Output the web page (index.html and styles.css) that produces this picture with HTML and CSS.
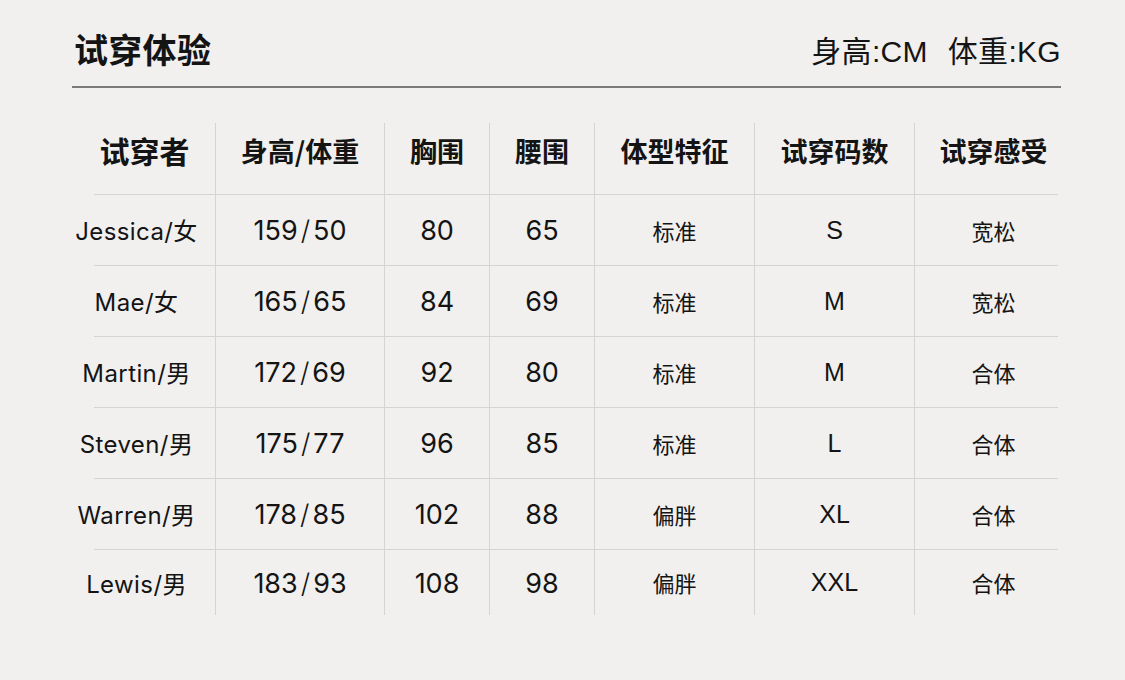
FILE: index.html
```html
<!DOCTYPE html>
<html lang="zh-CN">
<head>
<meta charset="utf-8">
<title>试穿体验</title>
<link rel="stylesheet" href="styles.css">
</head>
<body>
<div class="page">
  <header class="top">
    <h1 class="title">试穿体验</h1>
    <div class="units"><span>身高:CM</span><span>体重:KG</span></div>
  </header>
  <div class="table">
    <div class="row head">
      <div class="cell c-name">试穿者</div>
      <div class="cell">身高/体重</div>
      <div class="cell">胸围</div>
      <div class="cell">腰围</div>
      <div class="cell">体型特征</div>
      <div class="cell">试穿码数</div>
      <div class="cell">试穿感受</div>
    </div>
    <div class="row body">
      <div class="cell c-name name">Jessica/女</div>
      <div class="cell num">159<i>/</i>50</div>
      <div class="cell num">80</div>
      <div class="cell num">65</div>
      <div class="cell zh">标准</div>
      <div class="cell size">S</div>
      <div class="cell zh">宽松</div>
    </div>
    <div class="row body">
      <div class="cell c-name name">Mae/女</div>
      <div class="cell num">165<i>/</i>65</div>
      <div class="cell num">84</div>
      <div class="cell num">69</div>
      <div class="cell zh">标准</div>
      <div class="cell size">M</div>
      <div class="cell zh">宽松</div>
    </div>
    <div class="row body">
      <div class="cell c-name name">Martin/男</div>
      <div class="cell num">172<i>/</i>69</div>
      <div class="cell num">92</div>
      <div class="cell num">80</div>
      <div class="cell zh">标准</div>
      <div class="cell size">M</div>
      <div class="cell zh">合体</div>
    </div>
    <div class="row body">
      <div class="cell c-name name">Steven/男</div>
      <div class="cell num">175<i>/</i>77</div>
      <div class="cell num">96</div>
      <div class="cell num">85</div>
      <div class="cell zh">标准</div>
      <div class="cell size">L</div>
      <div class="cell zh">合体</div>
    </div>
    <div class="row body">
      <div class="cell c-name name">Warren/男</div>
      <div class="cell num">178<i>/</i>85</div>
      <div class="cell num">102</div>
      <div class="cell num">88</div>
      <div class="cell zh">偏胖</div>
      <div class="cell size">XL</div>
      <div class="cell zh">合体</div>
    </div>
    <div class="row body last">
      <div class="cell c-name name">Lewis/男</div>
      <div class="cell num">183<i>/</i>93</div>
      <div class="cell num">108</div>
      <div class="cell num">98</div>
      <div class="cell zh">偏胖</div>
      <div class="cell size">XXL</div>
      <div class="cell zh">合体</div>
    </div>
  </div>
</div>
</body>
</html>
```
FILE: styles.css
```css
html, body {
  margin: 0;
  padding: 0;
  background: #f1f0ee;
}
body {
  width: 1125px;
  height: 680px;
  overflow: hidden;
  color: #141414;
  font-family: "Noto Sans CJK SC", sans-serif;
}
.page {
  padding: 25px 0 0 72px;
  width: 989px;
}
.top {
  display: flex;
  justify-content: space-between;
  align-items: flex-start;
  height: 61px;
  border-bottom: 2px solid #7b7a78;
  padding: 0 0 0 2px;
}
.title {
  margin: 0;
  font-size: 34px;
  font-weight: 700;
  line-height: 48px;
  height: 48px;
  letter-spacing: 0.3px;
}
.units {
  display: flex;
  gap: 20px;
  font-family: "Liberation Sans", "Noto Sans CJK SC", sans-serif;
  font-size: 30px;
  letter-spacing: 0.3px;
  line-height: 48px;
  height: 48px;
  padding-top: 3px;
  padding-right: 0;
}
.table {
  margin-top: 35px;
  width: 1000px;
}
.row {
  display: grid;
  grid-template-columns: 143px 169px 105px 105px 160px 160px 158px;
  height: 71px;
}
.row.head {
  height: 71px;
}
.row.body {
  background: linear-gradient(#d5d4d2, #d5d4d2) 22px 0 / 964px 1px no-repeat;
}
.cell {
  display: flex;
  align-items: center;
  justify-content: center;
  border-left: 1px solid #d5d4d2;
}
.cell.c-name {
  border-left: 0;
}
.head .cell {
  font-size: 27px;
  font-weight: 700;
  padding-bottom: 17px;
}
.head .cell.c-name {
  font-size: 30px;
  padding-left: 2px;
}
.name {
  font-family: "Inter", "Noto Sans CJK SC", sans-serif;
  font-size: 24px;
  letter-spacing: 0.4px;
  padding-right: 14px;
  padding-top: 0;
}
.num {
  font-family: "Inter", sans-serif;
  font-size: 27px;
  padding-top: 2px;
}
.num i {
  font-style: normal;
  font-weight: 300;
  margin: 0 3px;
}
.zh {
  font-size: 22px;
  padding-top: 0;
}
.size {
  font-family: "Liberation Sans", sans-serif;
  font-size: 25px;
  padding-top: 1px;
}
.last {
  height: 66px;
}
```
